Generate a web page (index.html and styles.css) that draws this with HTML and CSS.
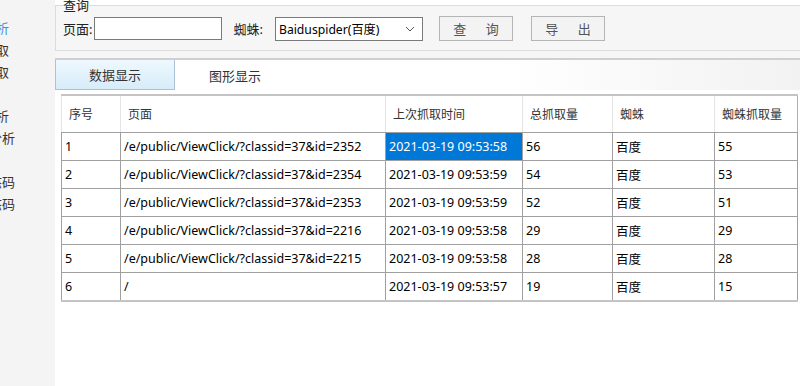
FILE: index.html
```html
<!DOCTYPE html>
<html lang="zh-CN">
<head>
  <meta charset="utf-8">
  <title>蜘蛛抓取</title>
  <link rel="stylesheet" href="styles.css">
</head>
<body>
  <div class="app">
    <aside class="nav">
      <div class="nav-item selected">蜘蛛分析</div>
      <div class="nav-item">页面抓取</div>
      <div class="nav-item">蜘蛛抓取</div>
      <div class="nav-item"></div>
      <div class="nav-item">来路分析</div>
      <div class="nav-item deep">受访分析</div>
      <div class="nav-item"></div>
      <div class="nav-item code">返回状态码</div>
      <div class="nav-item code">错误状态码</div>
    </aside>

    <main class="main">
      <fieldset class="query">
        <legend>查询</legend>
        <label class="lbl">页面:</label>
        <input class="field" type="text">
        <label class="lbl spider-lbl">蜘蛛:</label>
        <div class="select">
          <span>Baiduspider(百度)</span>
          <svg width="10" height="6" viewBox="0 0 10 6"><path d="M1 1 L5 5 L9 1" fill="none" stroke="#555" stroke-width="1"/></svg>
        </div>
        <button class="btn">查 询</button>
        <button class="btn">导 出</button>
      </fieldset>

      <div class="tabs">
        <div class="tab active">数据显示</div>
        <div class="tab">图形显示</div>
      </div>

      <div class="grid-wrap">
        <table class="grid">
          <colgroup>
            <col style="width:59px">
            <col style="width:265px">
            <col style="width:137px">
            <col style="width:90px">
            <col style="width:102px">
            <col style="width:83px">
          </colgroup>
          <thead>
            <tr>
              <th>序号</th>
              <th>页面</th>
              <th>上次抓取时间</th>
              <th>总抓取量</th>
              <th>蜘蛛</th>
              <th>蜘蛛抓取量</th>
            </tr>
          </thead>
          <tbody>
            <tr><td>1</td><td>/e/public/ViewClick/?classid=37&amp;id=2352</td><td class="cur">2021-03-19 09:53:58</td><td>56</td><td>百度</td><td>55</td></tr>
            <tr><td>2</td><td>/e/public/ViewClick/?classid=37&amp;id=2354</td><td>2021-03-19 09:53:59</td><td>54</td><td>百度</td><td>53</td></tr>
            <tr><td>3</td><td>/e/public/ViewClick/?classid=37&amp;id=2353</td><td>2021-03-19 09:53:59</td><td>52</td><td>百度</td><td>51</td></tr>
            <tr><td>4</td><td>/e/public/ViewClick/?classid=37&amp;id=2216</td><td>2021-03-19 09:53:58</td><td>29</td><td>百度</td><td>29</td></tr>
            <tr><td>5</td><td>/e/public/ViewClick/?classid=37&amp;id=2215</td><td>2021-03-19 09:53:58</td><td>28</td><td>百度</td><td>28</td></tr>
            <tr><td>6</td><td>/</td><td>2021-03-19 09:53:57</td><td>19</td><td>百度</td><td>15</td></tr>
          </tbody>
        </table>
      </div>
    </main>
  </div>
</body>
</html>
```

FILE: styles.css
```css
html, body {
  margin: 0;
  padding: 0;
  height: 100%;
}
body {
  font-family: "Noto Sans", "Noto Sans CJK SC", sans-serif;
  font-size: 12px;
  color: #000;
  background: #fff;
  overflow: hidden;
}

.app {
  display: flex;
  width: 800px;
  height: 386px;
}

/* left menu, scrolled so only the tail of each label shows */
.nav {
  width: 55px;
  flex: none;
  background: #f4f4f4;
  overflow: hidden;
  padding-top: 17px;
  box-sizing: border-box;
}
.nav-item {
  height: 22px;
  line-height: 22px;
  font-size: 13px;
  white-space: nowrap;
  margin-left: -43px;
  color: #333;
}
.nav-item.deep {
  margin-left: -37px;
}
.nav-item.code {
  margin-left: -50px;
}
.nav-item.selected {
  color: #3c8ee0;
}

.main {
  flex: 1;
  display: flex;
  flex-direction: column;
  overflow: hidden;
  background: #fff;
}

/* query group */
.query {
  flex: none;
  margin: -1px -10px 0 0;
  padding: 5px 7px 6px 7px;
  border: 1px solid #dcdcdc;
  background: #f6f6f6;
  display: flex;
  align-items: center;
  height: 52px;
  box-sizing: border-box;
  box-shadow: 0 7px 0 #f6f6f6;
}
.query legend {
  font-size: 13px;
  line-height: 12px;
  padding: 0;
  color: #222;
}
.lbl {
  font-size: 13px;
  color: #222;
  white-space: nowrap;
}
.field {
  margin-left: 2px;
  width: 128px;
  height: 23px;
  box-sizing: border-box;
  border: 1px solid #7a7a7a;
  background: #fff;
  padding: 0;
}
.spider-lbl {
  margin-left: 11px;
}
.select {
  margin-left: 12px;
  width: 148px;
  height: 24px;
  box-sizing: border-box;
  border: 1px solid #7a7a7a;
  background: #fff;
  display: flex;
  align-items: center;
  justify-content: space-between;
  padding: 0 7px 0 3px;
  font-size: 12.2px;
}
.btn {
  width: 74px;
  height: 25px;
  margin-left: 16px;
  border: 1px solid #b5b5b5;
  background: #f3f3f3;
  font-family: inherit;
  font-size: 13px;
  letter-spacing: 8px;
  color: #555;
  padding: 0 0 0 8px;
}
.btn + .btn {
  margin-left: 18px;
}

/* tab strip */
.tabs {
  flex: none;
  margin-top: 7px;
  border-top: 2px solid #cfcfcf;
  height: 30px;
  display: flex;
  background: linear-gradient(to right, #fff 60%, #f2f2f2);
}
.tab {
  width: 120px;
  height: 30px;
  box-sizing: border-box;
  font-size: 13px;
  color: #333;
  display: flex;
  align-items: center;
  justify-content: center;
}
.tab.active {
  border: 1px solid #a9c2d6;
  border-top: none;
  background: linear-gradient(#eef8fe, #d7ecf9);
}

/* data grid */
.grid-wrap {
  padding: 4px 0 0 6px;
}
.grid {
  border-collapse: collapse;
  width: 736px;
  table-layout: fixed;
  border-top: 2px solid #c4c4c4;
  border-left: 1px solid #b0b0b0;
  border-right: 1px solid #b0b0b0;
}
.grid th {
  height: 36px;
  font-weight: normal;
  text-align: left;
  padding: 0 0 0 7px;
  color: #333;
  border-left: 1px solid #e4e4e4;
  border-bottom: 1px solid #a0a0a0;
  font-size: 12px;
}
.grid td {
  height: 27px;
  padding: 0 0 0 3px;
  border: 1px solid #a0a0a0;
  white-space: nowrap;
  overflow: hidden;
  font-size: 12.5px;
}
.grid tbody tr:last-child td {
  border-bottom: 2px solid #c4c4c4;
}
.grid td.cur {
  background: #0078d7;
  color: #fff;
}
```
